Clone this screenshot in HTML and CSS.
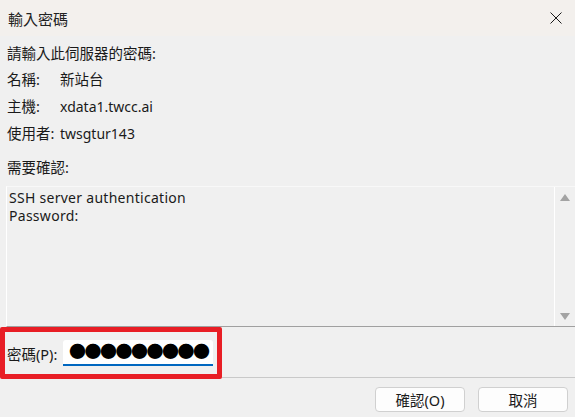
FILE: index.html
```html
<!DOCTYPE html>
<html lang="zh-Hant">
<head>
<meta charset="utf-8">
<link rel="stylesheet" href="styles.css">
</head>
<body>
<div class="dialog">
  <div class="titlebar">
    <span class="title">輸入密碼</span>
    <svg class="close" width="12" height="12" viewBox="0 0 12 12"><path d="M0.5 0.5L11.5 11.5M11.5 0.5L0.5 11.5" stroke="#1a1a1a" stroke-width="1"/></svg>
  </div>
  <div class="content">
    <div class="line prompt cjk">請輸入此伺服器的密碼:</div>
    <div class="info">
      <span class="k cjk">名稱:</span><span class="v cjk">新站台</span>
      <span class="k cjk">主機:</span><span class="v">xdata1.twcc.ai</span>
      <span class="k cjk">使用者:</span><span class="v">twsgtur143</span>
    </div>
    <div class="line need cjk">需要確認:</div>
  </div>
  <div class="textbox">
    <div class="textcontent">
      <div class="tl">SSH server authentication</div>
      <div class="tl">Password:</div>
    </div>
    <div class="scrollbar">
      <span class="arrow up"></span>
      <span class="arrow down"></span>
    </div>
  </div>
  <div class="pwrow">
    <div class="highlight">
      <span class="pwlabel cjk">密碼(P):</span>
      <div class="pwinput">●●●●●●●●●</div>
    </div>
  </div>
  <div class="footer">
    <button class="btn">確認(O)</button>
    <button class="btn">取消</button>
  </div>
</div>
</body>
</html>
```
FILE: styles.css
```css
* { box-sizing: border-box; }
html, body { margin: 0; padding: 0; }
body {
  width: 575px;
  height: 417px;
  background: #f0f0f0;
  font-family: "Noto Sans", "Noto Sans CJK TC", sans-serif;
  font-size: 14px;
  color: #1a1a1a;
  overflow: hidden;
}
.cjk { font-size: 14.5px; }
.dialog { display: flex; flex-direction: column; height: 417px; }
.titlebar {
  height: 36px;
  flex: none;
  background: #f3f0ed;
  display: flex;
  align-items: center;
  justify-content: space-between;
  padding: 0 13px 0 8px;
}
.title { font-size: 15px; font-family: "Noto Sans CJK TC", sans-serif; color: #222; }
.close { display: block; }
.content { padding: 4px 7px 0 7px; }
.line { height: 26px; line-height: 26px; }
.info {
  display: grid;
  grid-template-columns: 53px 1fr;
  grid-auto-rows: 27px;
  line-height: 27px;
}
.need { margin-top: 7px; }
.textbox {
  margin: 6px 0 0 6px;
  height: 141px;
  flex: none;
  border-left: 1px solid #ffffff;
  border-top: 1px solid #f8f8f8;
  border-bottom: 1px solid #a0a0a0;
  display: flex;
}
.textcontent {
  flex: 1;
  padding: 2px 0 0 2px;
  font-size: 14px;
  letter-spacing: 0.28px;
}
.tl { height: 18px; line-height: 18px; }
.scrollbar {
  width: 21px;
  border-left: 1px solid #ffffff;
  display: flex;
  flex-direction: column;
  justify-content: space-between;
  align-items: center;
  padding: 7px 0 6px 0;
}
.arrow { width: 0; height: 0; border-left: 5px solid transparent; border-right: 5px solid transparent; }
.arrow.up { border-bottom: 7px solid #a3a3a3; }
.arrow.down { border-top: 7px solid #a3a3a3; }
.pwrow {
  flex: none;
  border-bottom: 1px solid #c9c9c9;
  height: 51px;
}
.highlight {
  position: relative;
  width: 222px;
  height: 52px;
  border: 5px solid #e81e25;
  border-radius: 2px;
  display: flex;
  align-items: center;
  padding-left: 2px;
}
.pwlabel { width: 56px; }
.pwinput {
  width: 150px;
  height: 26px;
  background: #ffffff;
  border-bottom: 2px solid #0067c0;
  border-radius: 3px 3px 0 0;
  font-size: 17px;
  line-height: 24px;
  padding-left: 6px;
  letter-spacing: -1.5px;
  color: #000;
  overflow: hidden;
  white-space: nowrap;
}
.footer {
  display: flex;
  justify-content: flex-end;
  gap: 13px;
  padding: 9px 7px 0 0;
}
.btn {
  width: 90px;
  height: 25px;
  background: #fdfdfd;
  border: 1px solid #d0d0d0;
  border-radius: 4px;
  font-family: "Noto Sans", "Noto Sans CJK TC", sans-serif;
  font-size: 14.5px;
  color: #1a1a1a;
  padding: 0;
}
```
